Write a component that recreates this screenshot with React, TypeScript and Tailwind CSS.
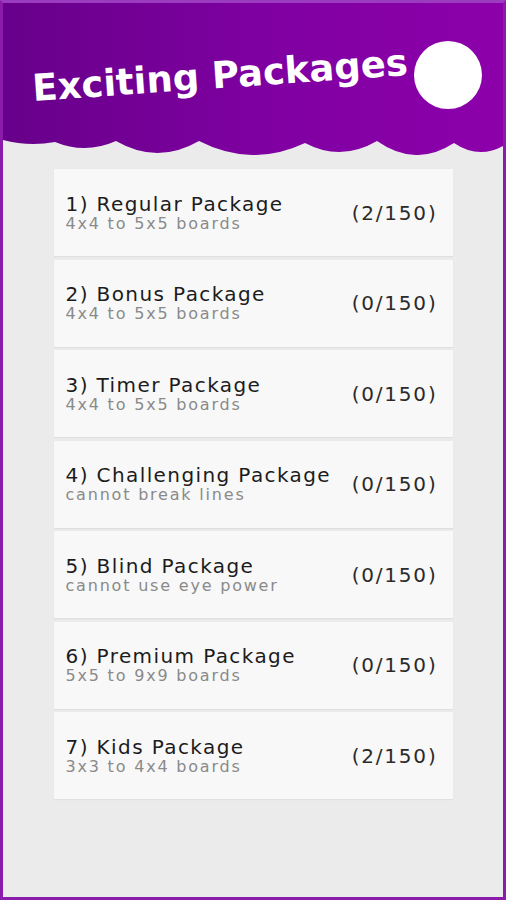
import React from "react";

type Pack = {
  id: number;
  name: string;
  detail: string;
  done: number;
  total: number;
};

const packs: Pack[] = [
  { id: 1, name: "Regular Package", detail: "4x4 to 5x5 boards", done: 2, total: 150 },
  { id: 2, name: "Bonus Package", detail: "4x4 to 5x5 boards", done: 0, total: 150 },
  { id: 3, name: "Timer Package", detail: "4x4 to 5x5 boards", done: 0, total: 150 },
  { id: 4, name: "Challenging Package", detail: "cannot break lines", done: 0, total: 150 },
  { id: 5, name: "Blind Package", detail: "cannot use eye power", done: 0, total: 150 },
  { id: 6, name: "Premium Package", detail: "5x5 to 9x9 boards", done: 0, total: 150 },
  { id: 7, name: "Kids Package", detail: "3x3 to 4x4 boards", done: 2, total: 150 },
];

function Header() {
  return (
    <div className="relative h-[152px]">
      {/* purple banner with the scalloped bottom edge */}
      <svg
        className="absolute inset-0"
        width="500"
        height="152"
        viewBox="0 0 500 152"
        preserveAspectRatio="none"
      >
        <defs>
          <linearGradient id="hdr" x1="0" y1="0" x2="1" y2="0">
            <stop offset="0" stopColor="#67008a" />
            <stop offset="0.55" stopColor="#8000a2" />
            <stop offset="1" stopColor="#8c00aa" />
          </linearGradient>
        </defs>
        <path
          d="M0 0 H500 V143 Q475.5 156.5 451 140 Q412.5 165 374 138 Q338 159 302 140 Q249 165 196 138 Q154.5 162 113 138 Q82.5 151.5 52 139 Q26 144 0 137 Z"
          fill="url(#hdr)"
        />
      </svg>

      <div className="relative flex items-center pt-[38px] pr-[21px]">
        <h1 className="ml-[28px] w-[378px] shrink-0 -rotate-[4deg] text-center font-['DejaVu_Sans',sans-serif] text-[37px] font-bold leading-none text-white">
          Exciting Packages
        </h1>
        <div className="ml-auto h-[68px] w-[68px] rounded-full bg-white" />
      </div>
    </div>
  );
}

function PackRow({ pack }: { pack: Pack }) {
  return (
    <div className="flex h-[87px] items-center justify-between bg-[#f8f8f8] pl-[12px] pr-[15px] shadow-[0_1px_1px_rgba(0,0,0,0.05)]">
      <div>
        <div className="text-[20px] leading-[22px] tracking-[1.4px] text-[#1c1c1c]">
          {pack.id}) {pack.name}
        </div>
        <div className="text-[16px] leading-[18px] tracking-[1.8px] text-[#8a8a8a]">
          {pack.detail}
        </div>
      </div>
      <div className="text-[20px] tracking-[1.8px] text-[#2a2a2a]">
        ({pack.done}/{pack.total})
      </div>
    </div>
  );
}

export default function App() {
  return (
    <div className="box-border h-[900px] w-[506px] overflow-hidden border-[3px] border-[#8b1bab] border-t-[#9b3cc0] bg-[#ebebeb] font-['DejaVu_Sans',sans-serif]">
      <Header />
      <div className="mx-auto mt-[14px] flex w-[399px] flex-col gap-[3.5px]">
        {packs.map((p) => (
          <PackRow key={p.id} pack={p} />
        ))}
      </div>
    </div>
  );
}
